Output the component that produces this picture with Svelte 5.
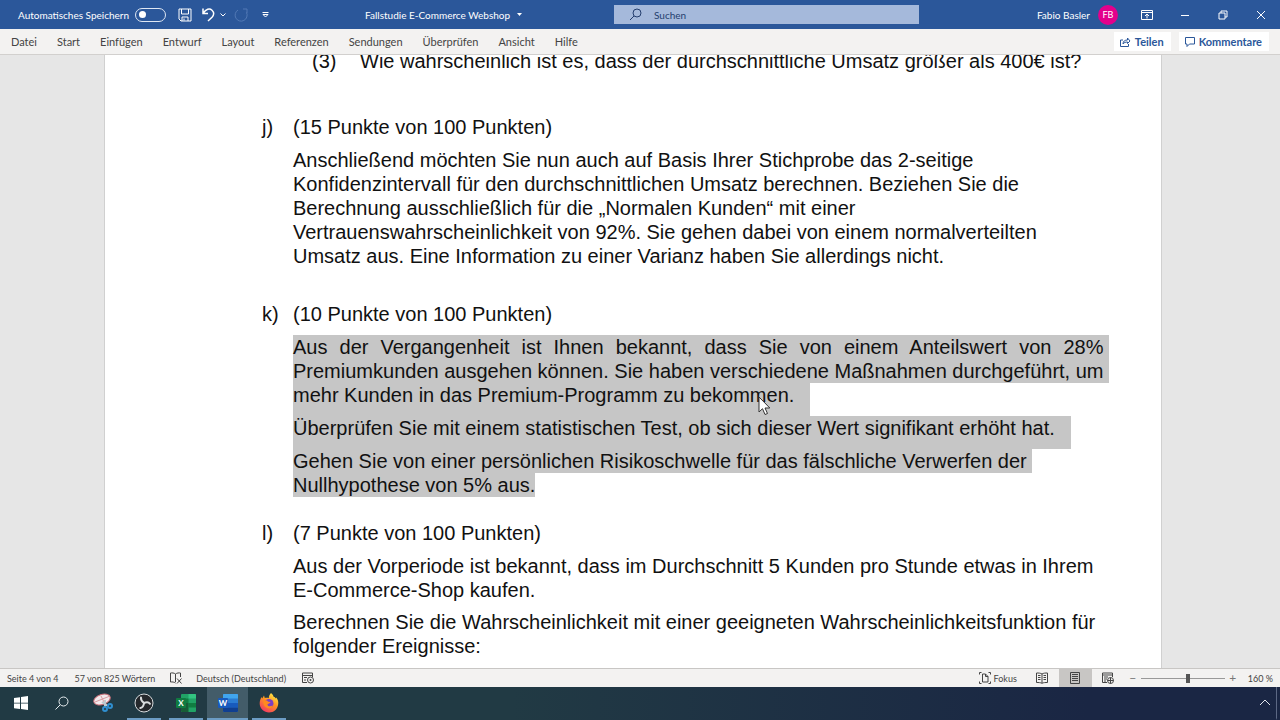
<script lang="ts">
  type Line = { text: string; justify?: boolean; end?: boolean };
  type Task = {
    label: string;
    title: string;
    selected?: boolean;
    paragraphs: Line[][];
  };

  const tabs = [
    "Datei",
    "Start",
    "Einfügen",
    "Entwurf",
    "Layout",
    "Referenzen",
    "Sendungen",
    "Überprüfen",
    "Ansicht",
    "Hilfe",
  ];

  const tasks: Task[] = [
    {
      label: "j)",
      title: "(15 Punkte von 100 Punkten)",
      paragraphs: [
        [
          { text: "Anschließend möchten Sie nun auch auf Basis Ihrer Stichprobe das 2-seitige" },
          { text: "Konfidenzintervall für den durchschnittlichen Umsatz berechnen. Beziehen Sie die" },
          { text: "Berechnung ausschließlich für die „Normalen Kunden“ mit einer" },
          { text: "Vertrauenswahrscheinlichkeit von 92%. Sie gehen dabei von einem normalverteilten" },
          { text: "Umsatz aus. Eine Information zu einer Varianz haben Sie allerdings nicht." },
        ],
      ],
    },
    {
      label: "k)",
      title: "(10 Punkte von 100 Punkten)",
      selected: true,
      paragraphs: [
        [
          { text: "Aus der Vergangenheit ist Ihnen bekannt, dass Sie von einem Anteilswert von 28%", justify: true },
          { text: "Premiumkunden ausgehen können. Sie haben verschiedene Maßnahmen durchgeführt, um", justify: true },
          { text: "mehr Kunden in das Premium-Programm zu bekommen.", end: true },
        ],
        [{ text: "Überprüfen Sie mit einem statistischen Test, ob sich dieser Wert signifikant erhöht hat.", end: true }],
        [
          { text: "Gehen Sie von einer persönlichen Risikoschwelle für das fälschliche Verwerfen der" },
          { text: "Nullhypothese von 5% aus." },
        ],
      ],
    },
    {
      label: "l)",
      title: "(7 Punkte von 100 Punkten)",
      paragraphs: [
        [
          { text: "Aus der Vorperiode ist bekannt, dass im Durchschnitt 5 Kunden pro Stunde etwas in Ihrem" },
          { text: "E-Commerce-Shop kaufen." },
        ],
        [
          { text: "Berechnen Sie die Wahrscheinlichkeit mit einer geeigneten Wahrscheinlichkeitsfunktion für" },
          { text: "folgender Ereignisse:" },
        ],
      ],
    },
  ];

  let autosave = $state(false);
  let zoom = $state(160);
</script>

<div class="window">
  <header class="titlebar">
    <div class="quick">
      <label class="autosave">
        Automatisches Speichern
        <input type="checkbox" role="switch" bind:checked={autosave} />
      </label>
      <button class="save" aria-label="Speichern">
        <svg width="14" height="14" viewBox="0 0 14 14">
          <path d="M1 1h12v12H3l-2-2zM3.5 1v5h7V1M4 13V9h6v4M6 10.5v2" />
        </svg>
      </button>
      <button class="undo" aria-label="Rückgängig">
        <svg width="13" height="15" viewBox="0 0 13 15">
          <path class="bold" d="M1 1.500v5h5M1.300 6C4 2 7.500 1 10 3.200c2.500 2.300 2 5 0 7L6 14" />
        </svg>
        <svg width="6" height="4" viewBox="0 0 6 4"><path d="M.5.5 3 3 5.500.5" /></svg>
      </button>
      <button class="redo" aria-label="Wiederholen">
        <svg width="14" height="14" viewBox="0 0 14 14">
          <path d="M9 1h4v4M12.500 4.500A6 6 0 1 1 4 2" />
        </svg>
      </button>
      <button class="customize" aria-label="Symbolleiste anpassen">
        <svg width="7" height="6" viewBox="0 0 7 6"><path d="M.5.5h6M1 2.500h5L3.500 5z" /></svg>
      </button>
    </div>
    <button class="filename">
      Fallstudie E-Commerce Webshop
      <svg width="5" height="3" viewBox="0 0 5 3"><path class="solid" d="M0 0h5L2.500 3z" /></svg>
    </button>
    <label class="search">
      <svg width="13" height="13" viewBox="0 0 13 13">
        <circle cx="8" cy="5" r="4" />
        <path d="M5 8 1 12" />
      </svg>
      <input type="text" placeholder="Suchen" aria-label="Suchen" />
    </label>
    <div class="account">
      <span>Fabio Basler</span>
      <span class="avatar">FB</span>
      <button aria-label="Menüband-Anzeigeoptionen">
        <svg width="12" height="10" viewBox="0 0 12 10">
          <path d="M.5.5h11v9H.5zM.5 2.500h11M6 8.500V4M4 6l2-2 2 2" />
        </svg>
      </button>
      <button aria-label="Minimieren">
        <svg width="10" height="10" viewBox="0 0 10 10"><path d="M1 5.500h8" /></svg>
      </button>
      <button aria-label="Verkleinern">
        <svg width="10" height="10" viewBox="0 0 10 10"><path d="M1 3h6v6H1zM3 3V1h6v6H7" /></svg>
      </button>
      <button aria-label="Schließen">
        <svg width="10" height="10" viewBox="0 0 10 10"><path d="m1 1 8 8M9 1 1 9" /></svg>
      </button>
    </div>
  </header>

  <nav class="ribbon">
    <div class="tabs">
      {#each tabs as tab}
        <button>{tab}</button>
      {/each}
    </div>
    <button class="action">
      <svg width="11" height="10" viewBox="0 0 11 10">
        <path d="M3 3H.5v6.500h8V7M3 7c0-3 2-4 4.500-4V1L10 4 7.500 6.500V5C5.500 5 4 5.500 3 7z" />
      </svg>
      Teilen
    </button>
    <button class="action">
      <svg width="10" height="10" viewBox="0 0 10 10">
        <path d="M.5.5h9v6.500H4.500L2 9.500V7H.5z" />
      </svg>
      Kommentare
    </button>
  </nav>

  <main>
    <article class="page">
      <div class="subitem">
        <span>(3)</span>
        <span>Wie wahrscheinlich ist es, dass der durchschnittliche Umsatz größer als 400€ ist?</span>
      </div>
      {#each tasks as task}
        <section class:selected={task.selected}>
          <span class="label">{task.label}</span>
          <h2>{task.title}</h2>
          <div class="text">
            {#each task.paragraphs as lines}
              <p>
                {#each lines as line}
                  <span class="line" class:justify={line.justify} class:end={line.end}>{line.text}</span>
                {/each}
              </p>
            {/each}
          </div>
        </section>
      {/each}
    </article>
    <svg class="cursor" width="13" height="20" viewBox="0 0 13 20">
      <path d="M1 1v15l3.500-3.300L7 18.500l2.500-1L7 12h4.800z" />
    </svg>
  </main>

  <footer class="status">
    <span class="pages">Seite 4 von 4</span>
    <span class="words">57 von 825 Wörtern</span>
    <button class="proof" aria-label="Rechtschreibprüfung">
      <svg width="12" height="12" viewBox="0 0 12 12">
        <path d="M5.500 2v8M5.500 2C4 .8 2 .8.5 1v9c2-.2 3.500 0 5 1M5.500 2C7 .8 9 .8 10.500 1v4M7 6.500l4.500 5M11.500 6.500l-4.500 5" />
      </svg>
    </button>
    <span class="language">Deutsch (Deutschland)</span>
    <button aria-label="Makro aufzeichnen">
      <svg width="12" height="12" viewBox="0 0 12 12">
        <path d="M5 10.500H.5V1h10v4M.5 3.500h10M2 5.500h3M2 8h2" />
        <circle cx="8.500" cy="8" r="3" /><circle class="solid" cx="8.500" cy="8" r="1" />
      </svg>
    </button>
    <button class="focus">
      <svg width="12" height="12" viewBox="0 0 12 12">
        <path d="M2.500.5h-2v2M.5 9.500v2h2M9.500.5h2v2M11.500 9.500v2h-2M3.500 2h3l2.500 2.500V10H3.500zM6.500 2v2.500H9" />
      </svg>
      Fokus
    </button>
    <div class="views">
      <button aria-label="Lesemodus">
        <svg width="12" height="12" viewBox="0 0 12 12">
          <path d="M6 2v9M6 2C4.500 1 2.500 1 .5 1v9.500c2 0 4 0 5.500.8 1.500-.8 3.500-.8 5.500-.8V1C9.500 1 7.500 1 6 2M2 3.500h2.500M2 5.500h2.500M2 7.500h2.500M7.500 3.500H10M7.500 5.500H10M7.500 7.500H10" />
        </svg>
      </button>
      <button class="active" aria-label="Drucklayout">
        <svg width="10" height="12" viewBox="0 0 10 12">
          <path d="M.5.5h9v11h-9zM2 2.500h6M2 4.500h6M2 6.500h6M2 8.500h6" />
        </svg>
      </button>
      <button aria-label="Weblayout">
        <svg width="12" height="12" viewBox="0 0 12 12">
          <path d="M5 10.500H.5V1h10v4M.5 3h10M2 5h4M2 7h3M2 9h2" />
          <circle cx="8.500" cy="8.500" r="3" /><path d="M5.500 8.500h6M8.500 5.500v6" />
        </svg>
      </button>
    </div>
    <div class="zoom">
      <button aria-label="Verkleinern">−</button>
      <input type="range" min="10" max="276" bind:value={zoom} aria-label="Zoom" />
      <button aria-label="Vergrößern">+</button>
      <span>{zoom} %</span>
    </div>
  </footer>

  <div class="taskbar">
    <button aria-label="Start">
      <svg width="14" height="14" viewBox="0 0 14 14">
        <path fill="#fff" d="M0 2l6-.8v5.500H0zM7 1l7-1v6.700H7zM0 7.500h6V13l-6-.8zM7 7.500h7V14l-7-1z" />
      </svg>
    </button>
    <button aria-label="Suche">
      <svg width="14" height="14" viewBox="0 0 14 14" fill="none" stroke="#e8edf0">
        <circle cx="8.500" cy="5.500" r="4.500" /><path d="M5.300 8.700.5 13.500" />
      </svg>
    </button>
    <button aria-label="Ausschneiden">
      <svg width="20" height="20" viewBox="0 0 20 20">
        <ellipse cx="9" cy="6.500" rx="8.500" ry="5" fill="#f3e9ec" stroke="#c96d76" transform="rotate(-18 9 6.500)" />
        <path d="M2 9 17 3M8 3l4 8" stroke="#d99aa0" />
        <path d="M9 9l6 4M12 7v7" stroke="#bdc9cf" stroke-width="2" />
        <g fill="none" stroke="#2f8fd0" stroke-width="2">
          <circle cx="12" cy="16" r="2" /><circle cx="17" cy="13" r="2" />
        </g>
      </svg>
    </button>
    <button class="open" aria-label="OBS Studio">
      <svg width="20" height="20" viewBox="0 0 20 20">
        <circle cx="10" cy="10" r="9" fill="#25282c" stroke="#d9dcde" />
        <g fill="none" stroke="#d9dcde" stroke-width="2" stroke-linecap="round">
          <path d="M10 10C8 8.500 6.500 7 7 4.500" />
          <path d="M10 10c2.300-1 4.500-1.200 6 .8" />
          <path d="M10 10c-.2 2.500-1.200 4.500-3.700 5" />
        </g>
      </svg>
    </button>
    <button class="open" aria-label="Excel">
      <svg width="20" height="18" viewBox="0 0 20 18">
        <rect x="5" width="15" height="18" rx="1" fill="#21a366" />
        <path fill="#107c41" d="M5 4.500h7.500V9H5zM12.500 9H20v4.500h-7.500z" />
        <path fill="#185c37" d="M5 9h7.500v9H6a1 1 0 0 1-1-1z" />
        <path fill="#33c481" d="M12.500 0H19a1 1 0 0 1 1 1v3.500h-7.500z" />
        <rect y="4" width="10" height="10" rx="1" fill="#107c41" />
        <text x="5" y="12" text-anchor="middle">X</text>
      </svg>
    </button>
    <button class="open current" aria-label="Word">
      <svg width="20" height="18" viewBox="0 0 20 18">
        <rect x="5" width="15" height="18" rx="1" fill="#2b7cd3" />
        <path fill="#41a5ee" d="M5 4.500V1a1 1 0 0 1 1-1h13a1 1 0 0 1 1 1v3.500z" />
        <path fill="#185abd" d="M5 9h15v4.500H5z" />
        <path fill="#103f91" d="M5 13.500h15V17a1 1 0 0 1-1 1H6a1 1 0 0 1-1-1z" />
        <rect y="4" width="10" height="10" rx="1" fill="#185abd" />
        <text x="5" y="12" text-anchor="middle">W</text>
      </svg>
    </button>
    <button class="open" aria-label="Firefox">
      <svg width="20" height="20" viewBox="0 0 20 20">
        <defs>
          <linearGradient id="fox" x1="0.8" y1="0" x2="0.2" y2="1">
            <stop offset="0" stop-color="#fff04a" />
            <stop offset="0.45" stop-color="#ff9322" />
            <stop offset="1" stop-color="#f0306a" />
          </linearGradient>
        </defs>
        <path fill="url(#fox)" d="M12 0c1.500 1.200 2.300 2.400 2.600 3.800 1 .2 1.700.8 2.200 1.600l.4-1C19 6.500 19.500 8.500 19.200 11c-.5 5-4.300 8.500-9.200 8.500S1 15.800.7 11c-.1-2.800.6-5 2-7l.5 1.500L5 2.500l.8 2.600c1.200-.5 2.800-.5 4 .1C9.700 3.300 10.500 1.500 12 0z" />
        <circle cx="10" cy="10.500" r="4.500" fill="#7b3fc4" />
        <path fill="#ff8a1e" d="M4.500 7.500c2-.5 3.500 0 4.700 1.200l2.300.3c-.4 1.200-1.500 1.700-2.700 1.900-.7.8 0 2 1.300 2.300 1.300.2 2.600-.2 3.900-.8-1 2.300-3 3.300-5.200 2.800-3.300-.7-5-4-4.300-7.700z" />
      </svg>
    </button>
    <button class="tray" aria-label="Ausgeblendete Symbole einblenden">
      <svg width="12" height="7" viewBox="0 0 12 7" fill="none" stroke="#e3e7ee"><path d="m1 6 5-5 5 5" /></svg>
    </button>
  </div>
</div>

<style>
  :global(body) {
    margin: 0;
  }

  .window {
    display: flex;
    flex-direction: column;
    height: 100vh;
    overflow: hidden;
    font-family: Lato, "Open Sans", sans-serif;
    font-size: 10px;
    white-space: nowrap;
  }

  button {
    display: flex;
    align-items: center;
    justify-content: center;
    padding: 0;
    border: none;
    background: none;
    color: inherit;
    font: inherit;
  }

  svg {
    display: block;
    flex: none;
  }

  .titlebar svg,
  .ribbon svg,
  .status svg {
    fill: none;
    stroke: currentColor;
  }

  svg .solid {
    fill: currentColor;
    stroke: none;
  }

  .titlebar {
    display: flex;
    align-items: center;
    flex: none;
    height: 29px;
    background: #2b579a;
    color: #fff;
  }

  .quick {
    display: flex;
    align-items: center;
    width: 365px;
    padding-left: 18px;
    box-sizing: border-box;
  }

  .autosave {
    display: flex;
    align-items: center;
    justify-content: space-between;
    width: 148px;
  }

  .autosave input {
    display: flex;
    align-items: center;
    appearance: none;
    box-sizing: border-box;
    width: 31px;
    height: 14px;
    margin: 0;
    padding: 0 3px;
    border: 1px solid #dfe7f3;
    border-radius: 7px;
  }

  .autosave input::before {
    content: "";
    width: 7px;
    height: 7px;
    border-radius: 50%;
    background: #fff;
  }

  .autosave input:checked {
    justify-content: flex-end;
  }

  .save {
    margin-left: 12px;
  }

  .undo {
    gap: 5px;
    margin-left: 10px;
  }

  .undo .bold {
    stroke-width: 1.5;
  }

  .redo {
    margin-left: 8px;
    color: #5279b5;
  }

  .customize {
    margin-left: 14px;
  }

  .filename {
    width: 157px;
    justify-content: space-between;
  }

  .search {
    display: flex;
    align-items: center;
    flex: 0 1 305px;
    gap: 12px;
    height: 19px;
    margin-left: 92px;
    padding-left: 15px;
    box-sizing: border-box;
    background: #a5b9db;
    color: #243e6e;
  }

  .search input {
    flex: 1;
    min-width: 0;
    padding: 0;
    border: none;
    background: none;
    font: inherit;
  }

  .search input::placeholder {
    color: #243e6e;
  }

  .account {
    display: flex;
    align-items: center;
    margin-left: auto;
  }

  .account button {
    width: 38px;
    height: 28px;
  }

  .avatar {
    width: 20px;
    margin: 0 10px 0 8px;
    border-radius: 50%;
    background: #e3008c;
    font-size: 9px;
    line-height: 20px;
    text-align: center;
  }

  .ribbon {
    display: flex;
    align-items: center;
    flex: none;
    gap: 8px;
    height: 25px;
    padding-right: 11px;
    border-bottom: 1px solid #d2d0ce;
    background: #f3f2f1;
    color: #444;
    font-size: 11px;
  }

  .tabs {
    display: flex;
    flex: 1;
    gap: 20px;
    padding-left: 11px;
  }

  .action {
    gap: 4px;
    height: 19px;
    padding: 0 7px 0 6px;
    background: #fff;
    color: #2b579a;
    font-weight: 700;
  }

  main {
    position: relative;
    flex: 1;
    min-height: 0;
    padding: 0 119px 0 105px;
    overflow: hidden;
    background: #e6e6e6;
  }

  .page {
    height: 100%;
    padding: 0 69px 0 157px;
    box-sizing: border-box;
    overflow: hidden;
    background: #fff;
    box-shadow: 0 0 0 1px #d0d0d0;
    color: #111;
    font-family: "Liberation Sans", Arial, sans-serif;
    font-size: 20px;
    line-height: 24px;
  }

  .subitem {
    display: grid;
    grid-template-columns: 48px 1fr;
    margin: -6px 0 42px;
    padding-left: 50px;
  }

  section {
    display: grid;
    grid-template-columns: 31px 1fr;
    row-gap: 9px;
    margin-bottom: 34px;
  }

  section.selected {
    margin-bottom: 24px;
  }

  h2,
  p {
    margin: 0;
    font: inherit;
  }

  .text {
    grid-column: 2;
  }

  p + p {
    margin-top: 8px;
  }

  .line {
    display: block;
    width: fit-content;
  }

  .selected .line {
    background: #c6c6c6;
  }

  .selected .line:not(.end) {
    padding-right: 5px;
  }

  .selected p:last-child .line:last-child {
    padding-right: 0;
  }

  .line.end {
    padding: 0 16px 9px 0;
  }

  .line.justify {
    width: auto;
    text-align-last: justify;
  }

  .selected p + p {
    margin-top: 0;
  }

  .cursor {
    position: absolute;
    top: 341px;
    left: 758px;
    fill: #fff;
    stroke: #333;
  }

  .status {
    display: flex;
    align-items: center;
    flex: none;
    height: 18px;
    padding: 0 7px;
    border-top: 1px solid #c8c6c4;
    background: #f3f2f1;
    color: #444;
    font-size: 9px;
  }

  .words {
    margin-left: 16px;
  }

  .proof {
    margin: 0 14px 0 15px;
  }

  .language {
    margin-right: 16px;
  }

  .focus {
    gap: 3px;
    margin-left: auto;
  }

  .views {
    display: flex;
    margin-left: 9px;
  }

  .views button {
    width: 33px;
    height: 18px;
  }

  .views .active {
    background: #c8c6c4;
  }

  .zoom {
    display: flex;
    align-items: center;
    gap: 3px;
    margin-left: 3px;
  }

  .zoom button {
    width: 10px;
    font-size: 12px;
    line-height: 12px;
    color: #777;
  }

  .zoom input {
    width: 84px;
    height: 12px;
    margin: 0;
    appearance: none;
    background: linear-gradient(#999, #999) center / 100% 1px no-repeat;
  }

  .zoom input::-webkit-slider-thumb {
    appearance: none;
    width: 4px;
    height: 9px;
    background: #555;
  }

  .zoom span {
    margin-left: 7px;
  }

  .taskbar {
    display: flex;
    flex: none;
    height: 33px;
    background: linear-gradient(90deg, #213a44, #213a44 40%, #1a2644 85%);
  }

  .taskbar button {
    width: 41px;
    border-bottom: 2px solid transparent;
  }

  .taskbar .open {
    width: 34px;
    margin: 0 4px;
    border-color: #6c9cc4;
  }

  .taskbar .current {
    width: 41px;
    margin: 0;
    background: #435c69;
  }

  .taskbar text {
    fill: #fff;
    font-size: 8px;
    font-weight: 700;
  }

  .taskbar .tray {
    width: 24px;
    margin-left: auto;
    border-right: 1px solid #5c6884;
    margin-right: 3px;
  }
</style>
